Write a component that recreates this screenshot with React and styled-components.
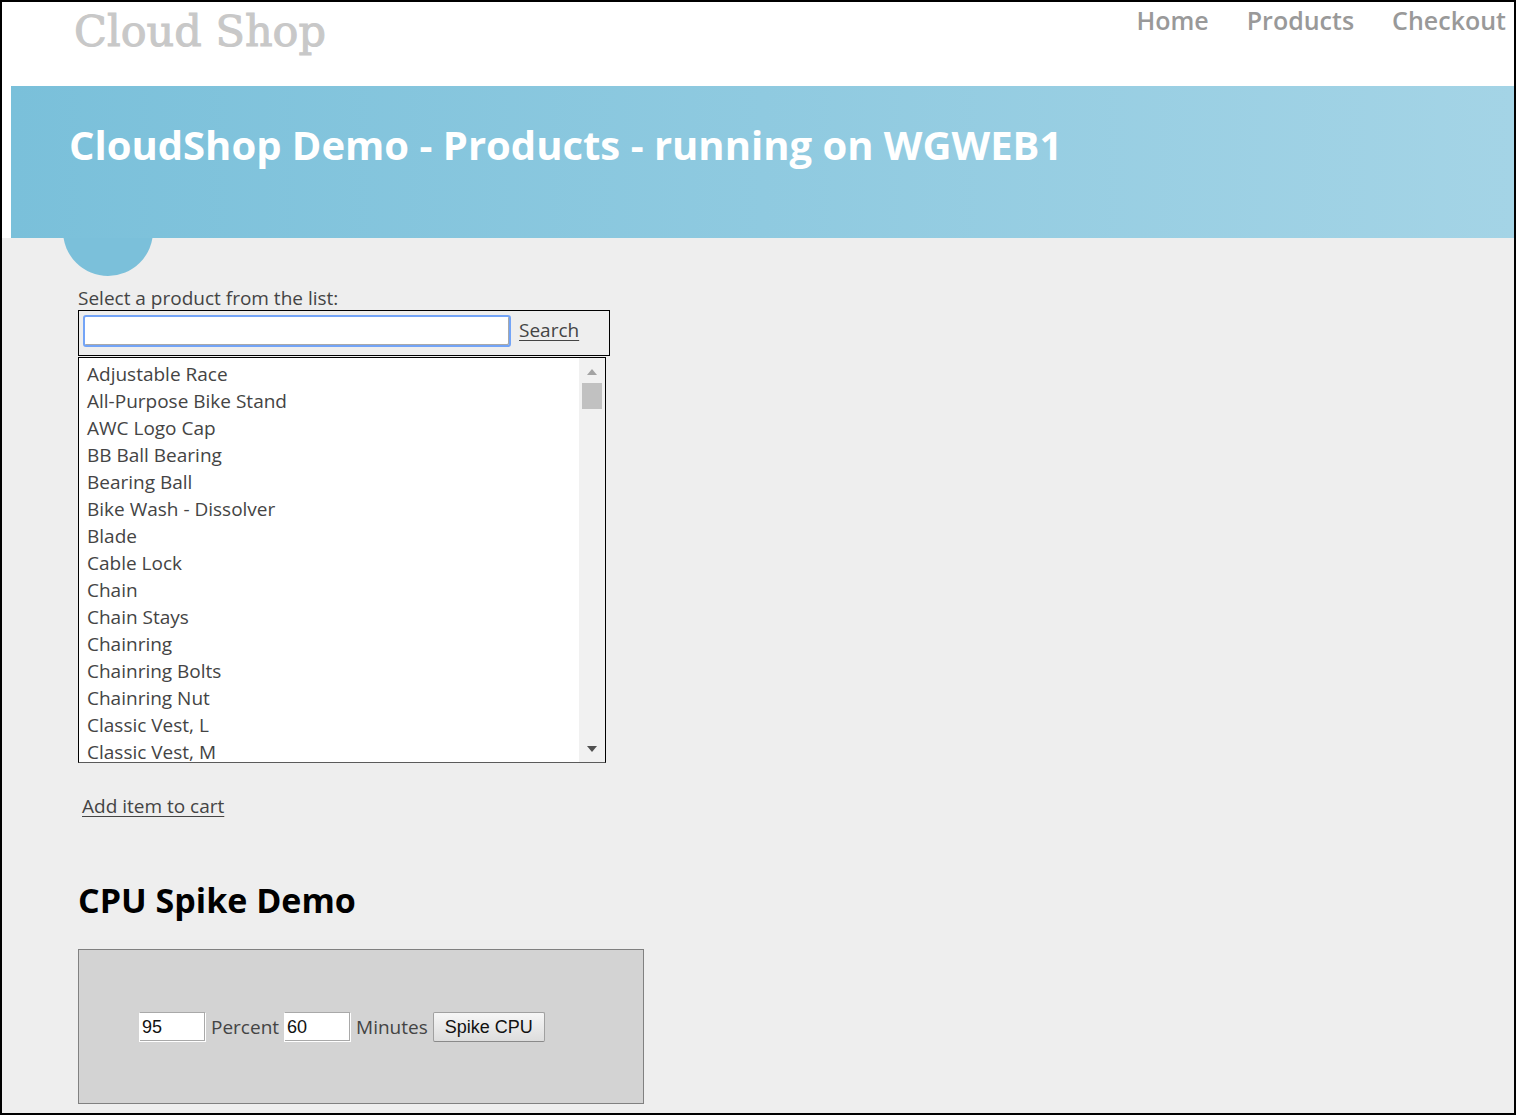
import React, { useRef } from "react";
import styled, { createGlobalStyle } from "styled-components";

const GlobalStyle = createGlobalStyle`
  *, *::before, *::after { box-sizing: border-box; }
  body {
    margin: 0;
    background: #eeeeee;
    color: #444444;
    font-family: "Open Sans", "Noto Sans", sans-serif;
    font-size: 19px;
    line-height: 24px;
  }
  h1, h2, p { margin: 0; }
`;

const Page = styled.div`
  min-height: 100vh;
  border: 2px solid #000000;
`;

const Header = styled.header`
  display: flex;
  justify-content: space-between;
  align-items: flex-start;
  height: 84px;
  padding: 0 8px 0 72px;
  background: #ffffff;
`;

const Logo = styled.a`
  color: #c8c8c8;
  font-family: "DejaVu Serif", serif;
  font-size: 43px;
  line-height: 58px;
  text-decoration: none;
  white-space: nowrap;
  -webkit-text-stroke: 1px #c8c8c8;
`;

const Nav = styled.nav`
  display: flex;
  gap: 38px;
`;

const NavLink = styled.a`
  color: #999999;
  font-size: 25px;
  font-weight: 600;
  line-height: 36px;
  text-decoration: none;
`;

const BannerRow = styled.div`
  padding-left: 9px;
  background: #ffffff;
`;

const Banner = styled.section`
  height: 152px;
  padding: 31px 58px;
  background: linear-gradient(to right, #7ac0da, #a4d4e6);
`;

const Title = styled.h1`
  color: #ffffff;
  font-size: 40px;
  font-weight: 700;
  line-height: 56px;
`;

const Bump = styled.div`
  width: 90px;
  height: 38px;
  margin-left: 61px;
  overflow: hidden;

  &::before {
    content: "";
    display: block;
    height: 90px;
    margin-top: -52px;
    border-radius: 50%;
    background: #7bc0da;
  }
`;

const Main = styled.main`
  padding: 10px 76px 8px;
`;

const FieldLabel = styled.label`
  display: block;
`;

const SearchBar = styled.form`
  display: flex;
  align-items: flex-start;
  gap: 8px;
  width: 532px;
  max-width: 100%;
  height: 46px;
  padding: 4px;
  border: 1px solid #000000;
`;

const SearchInput = styled.input`
  width: 428px;
  height: 32px;
  padding: 0 4px;
  border: 2px solid #73a4f7;
  border-radius: 3px;
  outline: none;
  background: #ffffff;
  box-shadow: inset -1px -1px 0 #a9a9a9;
  font: inherit;
`;

const TextLink = styled.a`
  color: #444444;
  line-height: ${(p) => p.$line || 24}px;
  text-decoration: underline;
  text-decoration-thickness: 1px;
  text-underline-offset: 3px;
`;

const ListFrame = styled.div`
  display: flex;
  width: 528px;
  max-width: 100%;
  height: 406px;
  margin-top: 1px;
  border: 1px solid #000000;
  border-bottom-color: #5a5a5a;
  background: #ffffff;
`;

const ProductList = styled.select`
  flex: 1;
  height: 404px;
  padding: 3px 0 0;
  border: 0;
  outline: none;
  background: #ffffff;
  color: #444444;
  font: inherit;
  scrollbar-width: none;

  &::-webkit-scrollbar { display: none; }
`;

const Product = styled.option`
  height: 27px;
  min-height: 27px;
  padding: 0 8px;
  line-height: 27px;
`;

const ScrollRail = styled.div`
  display: flex;
  flex-direction: column;
  width: 26px;
  padding: 0 3px 2px;
  background: #f1f1f1;
`;

const ScrollArrow = styled.button`
  display: flex;
  align-items: center;
  justify-content: center;
  height: 25px;
  padding: 2px 0 0;
  border: 0;
  background: transparent;
  color: ${(p) => p.$color};
`;

const ScrollTrack = styled.div`
  flex: 1;
`;

const ScrollThumb = styled.div`
  height: 26px;
  background: #c1c1c1;
`;

const CartLine = styled.p`
  padding: 31px 4px 0;
`;

const SectionTitle = styled.h2`
  margin-top: 58px;
  color: #000000;
  font-size: 34px;
  font-weight: 700;
  line-height: 48px;
`;

const SpikeForm = styled.form`
  display: flex;
  align-items: flex-start;
  gap: 5px;
  width: 566px;
  max-width: 100%;
  height: 155px;
  margin-top: 25px;
  padding: 62px 60px;
  border: 1px solid #808080;
  background: #d3d3d3;
`;

const SpikeField = styled.label`
  display: flex;
  align-items: center;
  gap: 5px;
`;

const NumberInput = styled.input`
  width: 67px;
  height: 30px;
  padding: 0 2px;
  border: 1px solid #ffffff;
  border-top-color: #a9a9a9;
  background: #ffffff;
  box-shadow: inset -1px -1px 0 #a9a9a9;
  color: #111111;
  font-family: "Liberation Sans", Arial, sans-serif;
  font-size: 18px;
`;

const SpikeButton = styled.button`
  width: 112px;
  height: 30px;
  padding: 0;
  border: 1px solid #a0a0a0;
  border-bottom-color: #8a8a8a;
  border-radius: 2px;
  background: linear-gradient(#f6f6f6, #dddddd);
  color: #111111;
  font-family: "Liberation Sans", Arial, sans-serif;
  font-size: 18px;
`;

const products = [
  "Adjustable Race",
  "All-Purpose Bike Stand",
  "AWC Logo Cap",
  "BB Ball Bearing",
  "Bearing Ball",
  "Bike Wash - Dissolver",
  "Blade",
  "Cable Lock",
  "Chain",
  "Chain Stays",
  "Chainring",
  "Chainring Bolts",
  "Chainring Nut",
  "Classic Vest, L",
  "Classic Vest, M",
];

function Triangle({ down }) {
  return (
    <svg width="10" height="6" viewBox="0 0 10 6" aria-hidden="true">
      <path d={down ? "M0 0H10L5 6Z" : "M0 6H10L5 0Z"} fill="currentColor" />
    </svg>
  );
}

export default function App() {
  const list = useRef(null);
  const scroll = (amount) => list.current.scrollBy({ top: amount });
  const stay = (event) => event.preventDefault();

  return (
    <>
      <GlobalStyle />
      <Page>
        <Header>
          <Logo href="#">Cloud Shop</Logo>
          <Nav>
            <NavLink href="#">Home</NavLink>
            <NavLink href="#">Products</NavLink>
            <NavLink href="#">Checkout</NavLink>
          </Nav>
        </Header>
        <BannerRow>
          <Banner>
            <Title>CloudShop Demo - Products - running on WGWEB1</Title>
          </Banner>
        </BannerRow>
        <Bump />
        <Main>
          <FieldLabel htmlFor="products">Select a product from the list:</FieldLabel>
          <SearchBar onSubmit={stay}>
            <SearchInput type="text" aria-labelledby="search-link" />
            <TextLink id="search-link" href="#" $line={30}>Search</TextLink>
          </SearchBar>
          <ListFrame>
            <ProductList id="products" size={15} ref={list}>
              {products.map((name) => (
                <Product key={name}>{name}</Product>
              ))}
            </ProductList>
            <ScrollRail aria-hidden="true">
              <ScrollArrow type="button" tabIndex={-1} $color="#a3a3a3" onClick={() => scroll(-27)}>
                <Triangle />
              </ScrollArrow>
              <ScrollTrack>
                <ScrollThumb />
              </ScrollTrack>
              <ScrollArrow type="button" tabIndex={-1} $color="#505050" onClick={() => scroll(27)}>
                <Triangle down />
              </ScrollArrow>
            </ScrollRail>
          </ListFrame>
          <CartLine>
            <TextLink href="#">Add item to cart</TextLink>
          </CartLine>
          <SectionTitle>CPU Spike Demo</SectionTitle>
          <SpikeForm onSubmit={stay}>
            <SpikeField>
              <NumberInput type="text" defaultValue="95" />
              Percent
            </SpikeField>
            <SpikeField>
              <NumberInput type="text" defaultValue="60" />
              Minutes
            </SpikeField>
            <SpikeButton type="submit">Spike CPU</SpikeButton>
          </SpikeForm>
        </Main>
      </Page>
    </>
  );
}
